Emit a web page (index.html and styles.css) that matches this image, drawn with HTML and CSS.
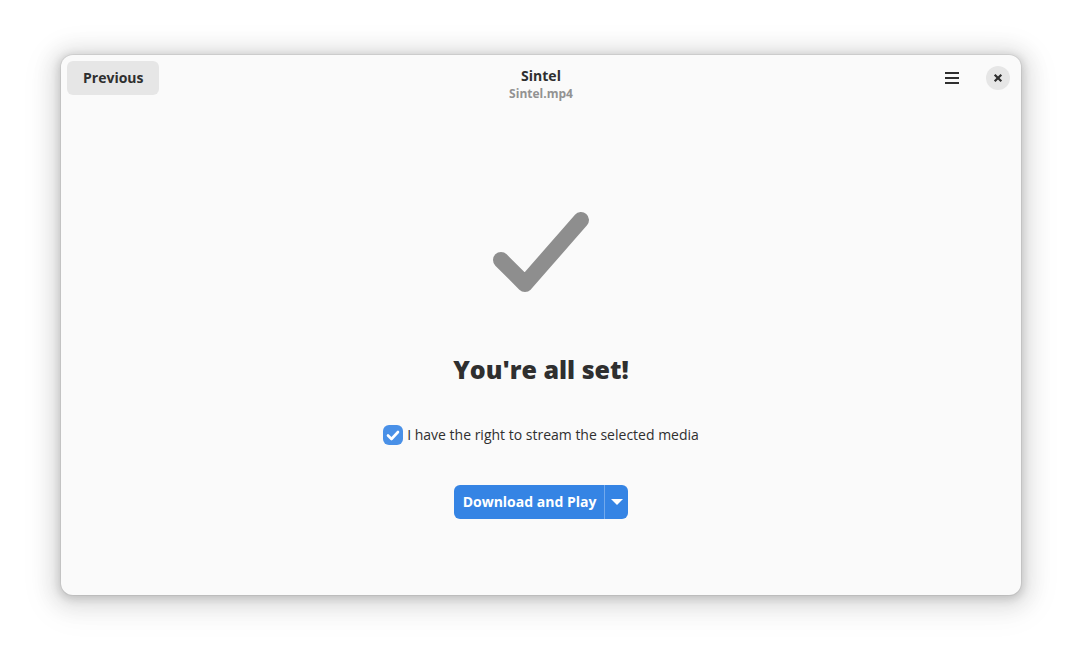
FILE: index.html
```html
<!DOCTYPE html>
<html lang="en">
<head>
<meta charset="utf-8">
<title>Sintel</title>
<link rel="stylesheet" href="styles.css">
</head>
<body>
<main class="window">
  <header class="headerbar">
    <div class="start"><button class="previous" type="button">Previous</button></div>
    <div class="titles">
      <div class="title">Sintel</div>
      <div class="subtitle">Sintel.mp4</div>
    </div>
    <div class="end">
      <button class="menu" type="button" aria-label="Main menu">
        <svg width="16" height="16" viewBox="0 0 16 16"><path d="M1 2h14v2H1zM1 7h14v2H1zM1 12h14v2H1z" fill="currentColor"/></svg>
      </button>
      <button class="close" type="button" aria-label="Close">
        <svg width="16" height="16" viewBox="0 0 16 16"><path d="M4.700 4.700l6.600 6.600M11.300 4.700l-6.600 6.600" stroke="currentColor" stroke-width="2.200"/></svg>
      </button>
    </div>
  </header>
  <section class="content">
    <svg class="status-icon" width="128" height="128" viewBox="0 0 128 128"><path d="M24 72l24 24L104 32" fill="none" stroke="currentColor" stroke-width="16" stroke-linecap="round" stroke-linejoin="round"/></svg>
    <h1 class="heading">You're all set!</h1>
    <label class="consent"><span class="box"><input class="check" type="checkbox" checked><svg class="tick" width="14" height="14" viewBox="0 0 14 14"><path d="M2 7.500l3.500 3.500L12 4" fill="none" stroke="#fff" stroke-width="2.600" stroke-linecap="round" stroke-linejoin="round"/></svg></span>I have the right to stream the selected media</label>
    <div class="split">
      <button class="play" type="button">Download and Play</button>
      <button class="more" type="button" aria-label="More options">
        <svg width="12" height="6" viewBox="0 0 12 6"><path d="M0 0h12L6 6z" fill="currentColor"/></svg>
      </button>
    </div>
  </section>
</main>
</body>
</html>
```
FILE: styles.css
```css
* { box-sizing: border-box; }
body {
  margin: 0;
  min-height: 100vh;
  padding: 55px 61px 67px;
  display: flex;
  background: #fff;
  color: #2f2f2f;
  font: 14px/20px "Open Sans", "Noto Sans", sans-serif;
}
button {
  border: 0;
  padding: 0;
  color: inherit;
  font: inherit;
  font-weight: 700;
}
svg { display: block; }
.window {
  flex: 1;
  display: flex;
  flex-direction: column;
  border-radius: 12px;
  background: #fafafa;
  box-shadow: 0 0 0 1px rgba(0, 0, 0, .05), 0 2px 8px 2px rgba(0, 0, 0, .15), 0 3px 20px 10px rgba(0, 0, 0, .09), 0 6px 32px 16px rgba(0, 0, 0, .04);
}
.headerbar {
  display: grid;
  grid-template-columns: 1fr auto 1fr;
  align-items: start;
  padding: 6px;
}
.start { display: flex; }
.previous {
  height: 34px;
  padding: 0 16px;
  border-radius: 6px;
  background: #e6e6e6;
}
.titles {
  padding-top: 5px;
  text-align: center;
  font-weight: 700;
}
.subtitle {
  color: #929292;
  font-size: 12px;
  line-height: 16px;
}
.end {
  display: flex;
  justify-content: flex-end;
  align-items: center;
  gap: 17px;
  padding-right: 5px;
}
.menu {
  display: grid;
  place-items: center;
  width: 34px;
  height: 34px;
  background: none;
}
.close {
  display: grid;
  place-items: center;
  width: 24px;
  height: 24px;
  border-radius: 50%;
  background: #e6e6e6;
}
.content {
  flex: 1;
  display: flex;
  flex-direction: column;
  align-items: center;
  padding-top: 80px;
}
.status-icon { color: #8e8e8e; }
.heading {
  margin: 35px 0 38px;
  font-size: 25px;
  font-weight: 800;
  line-height: 36px;
}
.consent {
  display: flex;
  align-items: center;
  gap: 4px;
}
.box {
  display: grid;
  place-items: center;
}
.check, .tick { grid-area: 1 / 1; }
.check {
  appearance: none;
  width: 20px;
  height: 20px;
  margin: 0;
  border-radius: 6px;
  background: #4990e7;
}
.tick { pointer-events: none; z-index: 1; }
.split {
  display: flex;
  margin-top: 40px;
  border-radius: 6px;
  overflow: hidden;
  color: #fff;
}
.play, .more {
  height: 34px;
  background: #3584e4;
}
.play { padding: 0 8px 0 9px; }
.more {
  display: grid;
  place-items: center;
  width: 24px;
  border-left: 1px solid #72a9ec;
}
```
